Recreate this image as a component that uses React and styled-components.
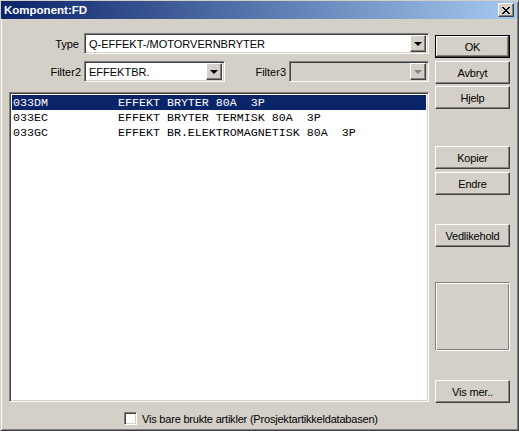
import React from "react";
import styled, { createGlobalStyle, css } from "styled-components";

const Global = createGlobalStyle`
  html, body { margin: 0; padding: 0; background: #D4D0C8; }
  body { font-family: "Liberation Sans", Arial, sans-serif; font-size: 11px; color: #000; }
  * { box-sizing: border-box; }
`;

const raised = css`
  border: 1px solid;
  border-color: #fff #404040 #404040 #fff;
  box-shadow: inset -1px -1px #808080, inset 1px 1px #D4D0C8;
`;

const sunken = css`
  border: 1px solid;
  border-color: #808080 #fff #fff #808080;
  box-shadow: inset 1px 1px #404040, inset -1px -1px #D4D0C8;
`;

const Window = styled.div`
  width: 519px;
  height: 431px;
  background: #D4D0C8;
  border: 1px solid;
  border-color: #D4D0C8 #404040 #404040 #D4D0C8;
  box-shadow: inset 1px 1px #fff, inset -1px -1px #808080;
  display: flex;
  flex-direction: column;
  overflow: hidden;
`;

const TitleBar = styled.div`
  height: 18px;
  margin: 0 1px 0 0;
  background: linear-gradient(to right, #0A246A, #A6CAF0);
  display: flex;
  align-items: center;
  padding: 0 3px 0 3px;
`;

const Title = styled.span`
  color: #fff;
  font-weight: bold;
  font-size: 11.5px;
`;

const CloseButton = styled.div`
  ${raised};
  margin-left: auto;
  width: 16px;
  height: 14px;
  background: #D4D0C8;
  display: flex;
  align-items: center;
  justify-content: center;
`;

const Body = styled.div`
  display: flex;
  align-items: flex-start;
  padding: 14px 7px 0 8px;
`;

const Main = styled.div`
  width: 420px;
  display: flex;
  flex-direction: column;
`;

const FieldRow = styled.div`
  display: flex;
  align-items: center;
  height: 21px;
  margin-bottom: ${(p) => p.$mb}px;
`;

const Label = styled.span`
  width: ${(p) => p.$w}px;
  margin-right: ${(p) => p.$gap}px;
  text-align: right;
  white-space: nowrap;
`;

const Combo = styled.div`
  ${sunken};
  width: ${(p) => p.$w}px;
  height: 21px;
  background: ${(p) => (p.$disabled ? "#D4D0C8" : "#fff")};
  display: flex;
  align-items: center;
  padding: 2px;
`;

const ComboText = styled.span`
  flex: 1;
  padding-left: 2px;
  white-space: nowrap;
  overflow: hidden;
`;

const ArrowButton = styled.div`
  ${raised};
  width: 16px;
  height: 17px;
  background: #D4D0C8;
  display: flex;
  align-items: center;
  justify-content: center;
`;

const Arrow = styled.div`
  width: 0;
  height: 0;
  border-left: 4px solid transparent;
  border-right: 4px solid transparent;
  border-top: 4px solid ${(p) => (p.$disabled ? "#808080" : "#000")};
  margin-top: 1px;
`;

const ListBox = styled.div`
  ${sunken};
  height: 310px;
  background: #fff;
  padding: 2px;
`;

const ListRow = styled.div`
  height: 15px;
  line-height: 16px;
  padding-left: 1px;
  font-family: "Liberation Mono", "Courier New", monospace;
  font-size: 11.67px;
  white-space: pre;
  background: ${(p) => (p.$selected ? "#0A246A" : "transparent")};
  color: ${(p) => (p.$selected ? "#fff" : "#000")};
`;

const Side = styled.div`
  margin-left: 6px;
  padding-top: 2px;
  display: flex;
  flex-direction: column;
  width: 75px;
`;

const Button = styled.div`
  ${raised};
  height: 23px;
  margin-top: ${(p) => p.$mt || 0}px;
  display: flex;
  align-items: center;
  justify-content: center;
  font-size: 11px;
  letter-spacing: -0.2px;
  ${(p) =>
    p.$default &&
    css`
      border: 1px solid #000;
      box-shadow: inset -1px -1px #404040, inset 1px 1px #fff, inset -2px -2px #808080;
    `}
`;

const Frame = styled.div`
  margin-top: ${(p) => p.$mt}px;
  height: 69px;
  border: 1px solid;
  border-color: #808080 #fff #fff #808080;
  box-shadow: inset 1px 1px #fff, inset -1px -1px #808080;
`;

const Footer = styled.div`
  display: flex;
  align-items: center;
  padding-left: 123px;
  margin-top: 9px;
  gap: 5px;
  letter-spacing: -0.2px;
`;

const CheckBox = styled.div`
  ${sunken};
  width: 13px;
  height: 13px;
  background: #fff;
`;

const rows = [
  ["033DM          EFFEKT BRYTER 80A  3P", true],
  ["033EC          EFFEKT BRYTER TERMISK 80A  3P", false],
  ["033GC          EFFEKT BR.ELEKTROMAGNETISK 80A  3P", false],
];

export default function App() {
  return (
    <>
      <Global />
      <Window>
        <TitleBar>
          <Title>Komponent:FD</Title>
          <CloseButton>
            <svg width="8" height="7" viewBox="0 0 8 7" shapeRendering="crispEdges">
              <path d="M0 0h2v1h-2zM6 0h2v1h-2zM1 1h2v1h-2zM5 1h2v1h-2zM2 2h4v1h-4zM3 3h2v1h-2zM2 4h4v1h-4zM1 5h2v1h-2zM5 5h2v1h-2zM0 6h2v1h-2zM6 6h2v1h-2z" fill="#000" />
            </svg>
          </CloseButton>
        </TitleBar>
        <Body>
          <Main>
            <FieldRow $mb={7}>
              <Label $w={70} $gap={5}>Type</Label>
              <Combo $w={345}>
                <ComboText>Q-EFFEKT-/MOTORVERNBRYTER</ComboText>
                <ArrowButton><Arrow /></ArrowButton>
              </Combo>
            </FieldRow>
            <FieldRow $mb={10}>
              <Label $w={72} $gap={3}>Filter2</Label>
              <Combo $w={141}>
                <ComboText>EFFEKTBR.</ComboText>
                <ArrowButton><Arrow /></ArrowButton>
              </Combo>
              <Label $w={61} $gap={3}>Filter3</Label>
              <Combo $w={140} $disabled>
                <ComboText />
                <ArrowButton><Arrow $disabled /></ArrowButton>
              </Combo>
            </FieldRow>
            <ListBox>
              {rows.map(([t, s]) => (
                <ListRow key={t} $selected={s}>{t}</ListRow>
              ))}
            </ListBox>
          </Main>
          <Side>
            <Button $default>OK</Button>
            <Button $mt={3}>Avbryt</Button>
            <Button $mt={2}>Hjelp</Button>
            <Button $mt={37}>Kopier</Button>
            <Button $mt={3}>Endre</Button>
            <Button $mt={29}>Vedlikehold</Button>
            <Frame $mt={35} />
            <Button $mt={29}>Vis mer..</Button>
          </Side>
        </Body>
        <Footer>
          <CheckBox />
          <span>Vis bare brukte artikler (Prosjektartikkeldatabasen)</span>
        </Footer>
      </Window>
    </>
  );
}
